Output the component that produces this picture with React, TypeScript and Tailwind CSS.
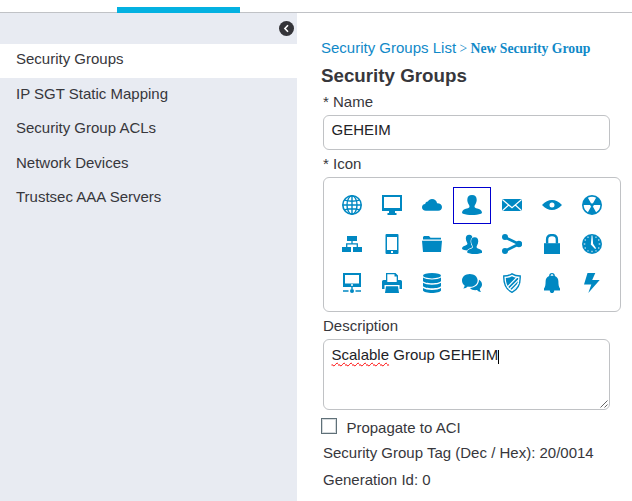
import type { ReactNode } from "react";

const navItems = [
  "Security Groups",
  "IP SGT Static Mapping",
  "Security Group ACLs",
  "Network Devices",
  "Trustsec AAA Servers",
];

const person =
  "M10 0C6.8 0 5.3 1.9 5.3 4.8C5.3 6.4 5.8 8 6.6 9.2C7.2 10.1 7.5 10.8 7.5 11.6C7.5 12.8 6.5 13.2 4.8 13.6C2.2 14.2 .6 15.2 .1 17C-.1 17.9 .2 18.5 1 18.8C6 20.4 14 20.4 19 18.8C19.8 18.5 20.1 17.9 19.9 17C19.4 15.2 17.8 14.2 15.2 13.6C13.5 13.2 12.5 12.8 12.5 11.6C12.5 10.8 12.8 10.1 13.4 9.2C14.2 8 14.7 6.4 14.7 4.8C14.7 1.9 13.2 0 10 0Z";

const icons: { name: string; art: ReactNode }[] = [
  {
    name: "globe",
    art: (
      <g fill="none" stroke="currentColor" strokeWidth="1.4">
        <circle cx="10" cy="10" r="9.2" strokeWidth="1.6" />
        <ellipse cx="10" cy="10" rx="5" ry="9.2" />
        <path d="M10 1V19M1 10H19M2.5 5.2Q10 7.4 17.5 5.2M2.5 14.8Q10 12.6 17.5 14.8" />
      </g>
    ),
  },
  {
    name: "monitor",
    art: <path fillRule="evenodd" d="M0 0H20V16H13V18H14.5V20H5.5V18H7V16H0ZM2 2V13H18V2Z" />,
  },
  {
    name: "cloud",
    art: (
      <path d="M4 15.8C1.6 15.8 0 14.3 0 12.3C0 10.4 1.3 9.1 3.2 8.9C3.4 7.3 4.5 6.4 5.9 6.5C6.7 4.9 8.1 4 10 4C12.8 4 14.7 5.6 15.1 8.3C17.9 8.2 20 9.8 20 12.1C20 14.4 18.5 15.8 16.2 15.8Z" />
    ),
  },
  { name: "user", art: <path d={person} /> },
  {
    name: "mail",
    art: (
      <>
        <path d="M0 4H20V16H0Z" />
        <path d="M.3 4.5L10 12.8L19.7 4.5M.3 15.7L7 9.7M19.7 15.7L13 9.7" fill="none" stroke="white" strokeWidth="1.2" />
      </>
    ),
  },
  {
    name: "eye",
    art: (
      <path
        fillRule="evenodd"
        d="M0 10C3.3 6.7 6.4 5 10 5C13.6 5 16.7 6.7 20 10C16.7 13.3 13.6 15 10 15C6.4 15 3.3 13.3 0 10ZM10 7.5A2.5 2.5 0 1 0 10 12.5A2.5 2.5 0 1 0 10 7.5Z"
      />
    ),
  },
  {
    name: "radiation",
    art: (
      <>
        <circle cx="10" cy="10" r="10" />
        <path
          fill="white"
          d="M10 10L5.9 2.8A8.3 8.3 0 0 1 14.1 2.8ZM10 10H18.3A8.3 8.3 0 0 1 14.1 17.2ZM10 10L5.9 17.2A8.3 8.3 0 0 1 1.7 10Z"
        />
        <circle cx="10" cy="10" r="1.8" />
      </>
    ),
  },
  {
    name: "network",
    art: (
      <>
        <path d="M5 2H15V7H5ZM0 13H9V18H0ZM11 13H20V18H11Z" />
        <path d="M10 7V10M4.7 13V9.8H15.3V13" fill="none" stroke="currentColor" strokeWidth="1.3" />
      </>
    ),
  },
  {
    name: "tablet",
    art: (
      <path
        fillRule="evenodd"
        d="M4.5 0H15.5Q16.5 0 16.5 1V19Q16.5 20 15.5 20H4.5Q3.5 20 3.5 19V1Q3.5 0 4.5 0ZM5 3V16H15V3ZM9 17H11V19H9Z"
      />
    ),
  },
  {
    name: "folder",
    art: <path d="M1 5V3L2 2H7L8.5 3.8H19V5.6H1ZM0 6.7H20L19 18H1Z" />,
  },
  {
    name: "users",
    art: (
      <>
        <path d={person} transform="translate(0 .8) scale(.72 .78)" />
        <path d={person} transform="translate(5.2 3.3) scale(.75 .84)" stroke="white" strokeWidth="1.6" />
        <path d={person} transform="translate(5.2 3.3) scale(.75 .84)" />
      </>
    ),
  },
  {
    name: "share",
    art: (
      <>
        <path d="M3 3.2L17 10L3 17" fill="none" stroke="currentColor" strokeWidth="2.7" />
        <circle cx="3" cy="3" r="3" />
        <circle cx="17" cy="10" r="3.2" />
        <circle cx="3" cy="17" r="3" />
      </>
    ),
  },
  {
    name: "lock",
    art: (
      <>
        <path d="M2 9.2H18V20H2Z" />
        <path d="M5.1 9.5V5.4C5.1 2.8 7 1.1 10 1.1S14.9 2.8 14.9 5.4V9.5" fill="none" stroke="currentColor" strokeWidth="2.4" />
      </>
    ),
  },
  {
    name: "clock",
    art: (
      <>
        <circle cx="10" cy="10" r="10" />
        <path d="M9.5 3H10.6L11.1 9.8L14.1 14.2L13.1 15L8.8 10.5Z" fill="white" />
        <g fill="white">
          <path d="M1.7 9.5H3.3V10.5H1.7ZM16.7 9.5H18.3V10.5H16.7ZM9.5 16.7H10.5V18.3H9.5ZM9.5 1.6H10.5V3H9.5Z" />
          <circle cx="6" cy="3.2" r=".65" />
          <circle cx="14" cy="3.2" r=".65" />
          <circle cx="3.2" cy="6" r=".65" />
          <circle cx="16.8" cy="6" r=".65" />
          <circle cx="3.2" cy="14" r=".65" />
          <circle cx="16.8" cy="14" r=".65" />
          <circle cx="6" cy="16.8" r=".65" />
          <circle cx="14" cy="16.8" r=".65" />
        </g>
      </>
    ),
  },
  {
    name: "connected computer",
    art: (
      <>
        <path fillRule="evenodd" d="M1 0H19V14H1ZM3 2V10.5H17V2ZM9 11.3V12.7H11V11.3Z" />
        <path d="M9.3 14H10.7V16H9.3ZM1 17.2H6.5V18.8H1ZM13.5 17.2H19V18.8H13.5Z" />
        <circle cx="10" cy="18" r="2" />
      </>
    ),
  },
  {
    name: "printer",
    art: (
      <>
        <path fillRule="evenodd" d="M4 0H13.5L16 2.5V9H4ZM5.3 1.3V9H14.7V3.5H12.5V1.3Z" />
        <path d="M1.5 7H4V9H16V7H18.5Q20 7 20 8.5V16H17.5V12H2.5V16H0V8.5Q0 7 1.5 7Z" />
        <path d="M4 13.2H16L17 20H3Z" />
      </>
    ),
  },
  {
    name: "database",
    art: (
      <>
        <ellipse cx="10" cy="2.7" rx="9" ry="2.7" />
        <path d="M1 4.5C4 7 16 7 19 4.5V8C18 11 2 11 1 8ZM1 9.8C4 12.3 16 12.3 19 9.8V13C18 16 2 16 1 13ZM1 15C4 17.5 16 17.5 19 15V17.5C18 20.8 2 20.8 1 17.5Z" />
      </>
    ),
  },
  {
    name: "chat",
    art: (
      <>
        <path d="M7.8 1C12.3 1 15.6 3.8 15.6 7.4S12.3 13.8 7.8 13.8C7 13.8 6.4 13.7 5.8 13.6C4.6 14.9 3.1 15.6 1.2 15.6C2.2 14.6 2.6 13.5 2.5 12.3C.9 11.2 0 9.5 0 7.4C0 3.8 3.3 1 7.8 1Z" />
        <path d="M17 6.8C18.9 7.9 20 9.6 20 11.6C20 13.3 19.2 14.7 17.8 15.8C17.8 17 18.2 18 19 19C17.3 18.9 16 18.2 15 17C12 17.5 9.4 16.6 8 14.9C13 14.8 17 11.8 17 6.8Z" />
      </>
    ),
  },
  {
    name: "shield",
    art: (
      <>
        <path
          d="M10 .8C7.8 2.3 4.8 3 1.8 3C1.5 10.8 4 16.5 10 19.3C16 16.5 18.5 10.8 18.2 3C15.2 3 12.2 2.3 10 .8Z"
          fill="none"
          stroke="currentColor"
          strokeWidth="1.4"
        />
        <path d="M10 3.2C8.2 4.3 6 4.9 3.8 5C3.8 10.7 5.8 14.9 10 17.1C14.2 14.9 16.2 10.7 16.2 5C14 4.9 11.8 4.3 10 3.2Z" />
        <path d="M5 14.4L14.6 4.6M6.9 16.5L17 6.4M9.5 17.7L16.8 10.2" stroke="white" strokeWidth="1.2" />
      </>
    ),
  },
  {
    name: "bell",
    art: (
      <path
        fillRule="evenodd"
        d="M10 0C11.8 0 12.9 1 12.9 3C15.4 4.1 16.4 5.9 16.4 8.5C16.4 12 16.8 14.1 18 15.4V17.4H12.2C12.2 18.9 11.5 20 10 20S7.8 18.9 7.8 17.4H2V15.4C3.2 14.1 3.6 12 3.6 8.5C3.6 5.9 4.6 4.1 7.1 3C7.1 1 8.2 0 10 0ZM10 1.2C9 1.2 8.7 1.8 8.7 2.9C9.6 2.6 10.4 2.6 11.3 2.9C11.3 1.8 11 1.2 10 1.2Z"
      />
    ),
  },
  { name: "bolt", art: <path d="M5.5 0H13.3L10.2 7H17.7L6.3 19.9L9.3 11.4H2Z" /> },
];

function IconPicker() {
  return (
    <div className="h-[135px] w-[298px] rounded-[6px] border border-[#c0c2c5] bg-white pl-[9px] pt-[8px]">
      <div className="grid grid-cols-[repeat(7,40px)] grid-rows-[repeat(3,39px)] text-[#0088c2]">
        {icons.map(({ name, art }) => (
          <button
            key={name}
            aria-label={name}
            className={
              name === "user"
                ? "mt-px flex h-[37px] w-[38px] justify-center border border-[#0000d0] pt-[7px]"
                : "flex h-[38px] w-[38px] items-center justify-center"
            }
          >
            <svg width="20" height="20" viewBox="0 0 20 20" fill="currentColor">
              {art}
            </svg>
          </button>
        ))}
      </div>
    </div>
  );
}

export default function App() {
  return (
    <div className="flex h-[501px] w-[632px] flex-col overflow-hidden bg-white font-['Liberation_Sans',Arial,sans-serif] text-[15px] leading-[18px] text-[#37373c]">
      <header className="flex h-[13px] shrink-0 items-end border-b border-[#c0c2c6] pl-[117px]">
        <div className="-mb-px h-[6px] w-[123px] bg-[#04b1e1]" />
      </header>
      <div className="flex min-h-0 flex-1">
        <aside className="w-[297px] shrink-0 bg-[#e8ebf2]">
          <div className="flex h-[31px] justify-end pr-[3px] pt-[8px]">
            <svg width="15" height="15" viewBox="0 0 15 15">
              <circle cx="7.5" cy="7.5" r="7.5" fill="#343439" />
              <path d="M9 4.3L5.9 7.5L9 10.7" fill="none" stroke="white" strokeWidth="1.6" />
            </svg>
          </div>
          <nav>
            {navItems.map((item, i) => (
              <div
                key={item}
                className={
                  i === 0
                    ? "h-[34.4px] bg-white pl-[16px] pt-[6px]"
                    : "h-[34.4px] pl-[16px] pt-[6.4px]"
                }
              >
                {item}
              </div>
            ))}
          </nav>
        </aside>
        <main className="flex min-w-0 flex-1 flex-col pl-[26px]">
          <div className="-ml-[2px] mt-[26px] flex h-[18px] items-baseline whitespace-pre text-[#1089c8]">
            <span>Security Groups List</span>
            <span className="font-['Liberation_Serif',serif] text-[13.6px]"> &gt; </span>
            <span className="font-['Liberation_Serif',serif] text-[13.7px] font-bold">New Security Group</span>
          </div>
          <h1 className="-ml-[2px] mt-[8px] text-[18.75px] font-bold leading-[22px]">Security Groups</h1>
          <label className="mt-[6px]">* Name</label>
          <div className="mt-[4px] h-[35px] w-[287px] rounded-[6px] border border-[#c0c2c5] pl-[7.5px] pt-[5px] text-[#222226]">
            GEHEIM
          </div>
          <label className="mb-[4px] mt-[5px]">* Icon</label>
          <IconPicker />
          <label className="mt-[5px]">Description</label>
          <div className="mt-[4px] flex h-[71px] w-[287px] justify-between rounded-[6px] border border-[#c0c2c5] pl-[7.5px] text-[#222226]">
            <div className="flex pt-[6px]">
              <span className="h-[18px] underline decoration-[#f00] decoration-wavy decoration-[1.3px] underline-offset-[2px]">
                Scalable
              </span>
              <span className="whitespace-pre"> Group GEHEIM</span>
              <span className="mt-[4px] h-[14px] w-px bg-black" />
            </div>
            <svg className="mb-px mr-px self-end" width="8" height="8" viewBox="0 0 8 8" stroke="#555" strokeWidth=".9">
              <path d="M.5 7.5L7.5 .5M4.5 7.5L7.5 4.5" />
            </svg>
          </div>
          <div className="-ml-[2px] mt-[8px] flex h-[18px]">
            <div className="h-[16px] w-[16px] border border-[#5f7078] shadow-[inset_0_0_0_1px_#d5dadd]" />
            <span className="ml-[9.4px] mt-[1px]">Propagate to ACI</span>
          </div>
          <div className="mt-[8px]">Security Group Tag (Dec / Hex): 20/0014</div>
          <div className="mt-[9px]">Generation Id: 0</div>
        </main>
      </div>
    </div>
  );
}
